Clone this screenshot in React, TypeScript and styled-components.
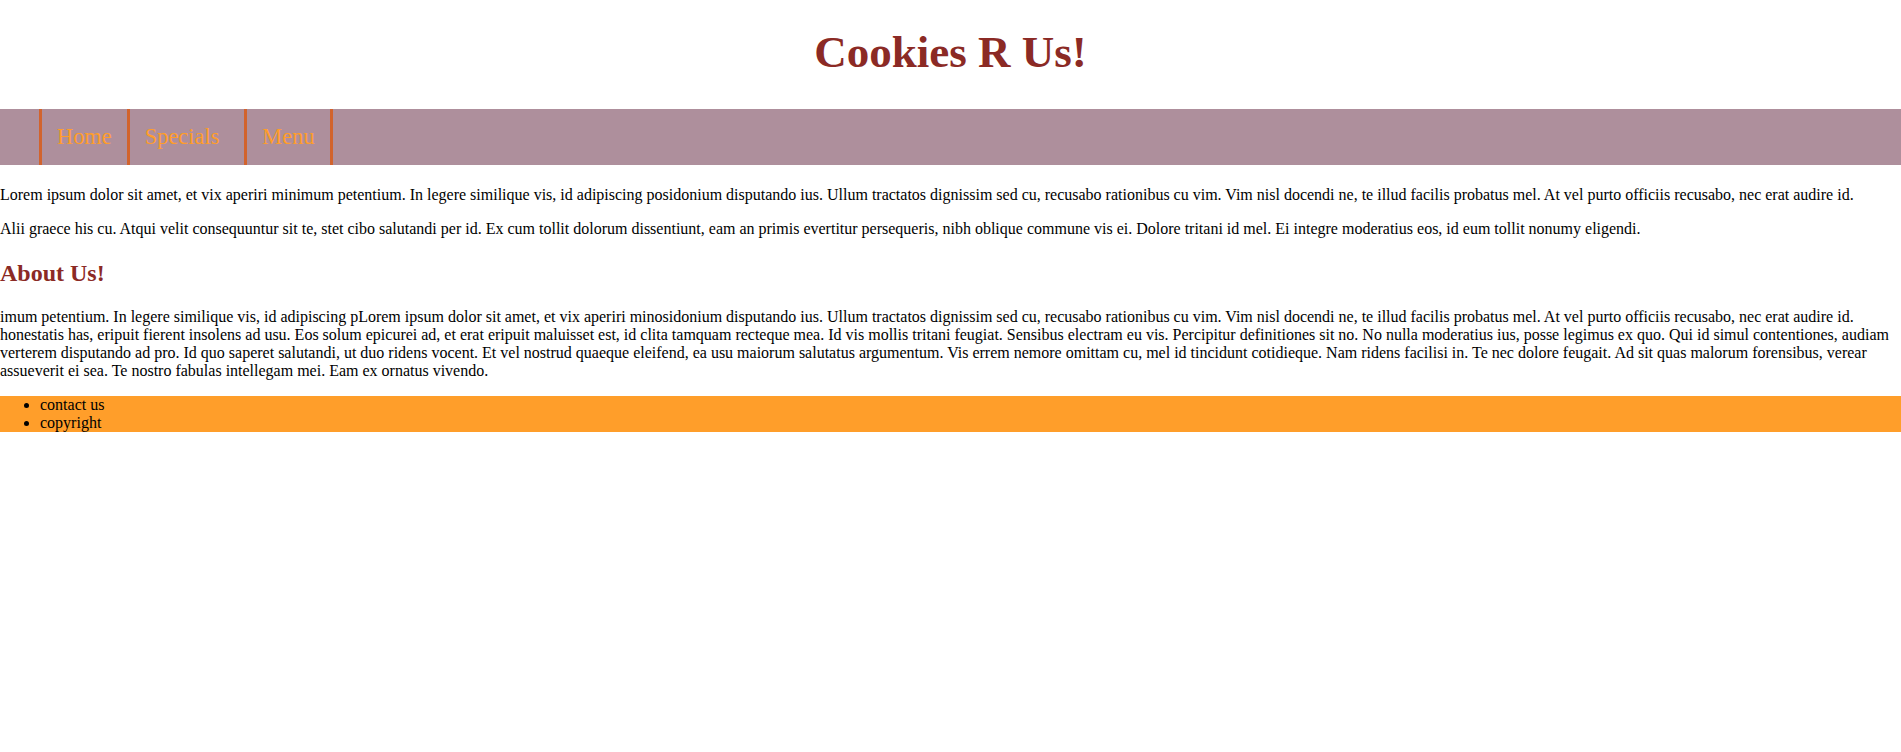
import React from "react";
import styled, { createGlobalStyle } from "styled-components";

const GlobalStyle = createGlobalStyle`
  html, body {
    margin: 0;
    padding: 0;
    background: #ffffff;
  }
  body {
    font-family: "Liberation Serif", "Times New Roman", serif;
    font-size: 16px;
    line-height: 18px;
    color: #000000;
  }
`;

const Header = styled.header`
  padding: 28px 0 33px;
  text-align: center;
`;

const Title = styled.h1`
  margin: 0;
  font-size: 45px;
  line-height: 48px;
  font-weight: bold;
  color: #8b2a25;
`;

const NavBar = styled.nav`
  height: 56px;
  background: #ae8f9c;
`;

const NavList = styled.ul`
  display: flex;
  align-items: stretch;
  height: 100%;
  margin: 0;
  padding: 0 0 0 39px;
  list-style: none;
`;

const NavItem = styled.li<{ $last?: boolean; $extra?: number }>`
  display: flex;
  align-items: center;
  padding: 0 ${(p) => 15 + (p.$extra ?? 0)}px 0 15px;
  border-left: 3px solid #d2632d;
  border-right: ${(p) => (p.$last ? "3px solid #d2632d" : "none")};
  font-size: 22.4px;
  line-height: normal;
  color: #ff9d2a;
`;

const Main = styled.main`
  padding-top: 5px;
`;

const Para = styled.p`
  margin: 16px 0;
`;

const SubHeading = styled.h2`
  margin: 22px 0 20px;
  font-size: 24px;
  line-height: 27.6px;
  font-weight: bold;
  color: #8b2a25;
`;

const Footer = styled.footer`
  background: #ff9e2a;
`;

const FooterList = styled.ul`
  margin: 0;
  padding-left: 40px;
  list-style: disc;
`;

export default function App() {
  return (
    <>
      <GlobalStyle />
      <Header>
        <Title>Cookies R Us!</Title>
      </Header>
      <NavBar>
        <NavList>
          <NavItem>Home</NavItem>
          <NavItem $extra={10}>Specials</NavItem>
          <NavItem $last>Menu</NavItem>
        </NavList>
      </NavBar>
      <Main>
        <Para>
          Lorem ipsum dolor sit amet, et vix aperiri minimum petentium. In legere similique vis, id adipiscing
          posidonium disputando ius. Ullum tractatos dignissim sed cu, recusabo rationibus cu vim. Vim nisl docendi
          ne, te illud facilis probatus mel. At vel purto officiis recusabo, nec erat audire id.
        </Para>
        <Para>
          Alii graece his cu. Atqui velit consequuntur sit te, stet cibo salutandi per id. Ex cum tollit dolorum
          dissentiunt, eam an primis evertitur persequeris, nibh oblique commune vis ei. Dolore tritani id mel. Ei
          integre moderatius eos, id eum tollit nonumy eligendi.
        </Para>
        <SubHeading>About Us!</SubHeading>
        <Para>
          imum petentium. In legere similique vis, id adipiscing pLorem ipsum dolor sit amet, et vix aperiri
          minosidonium disputando ius. Ullum tractatos dignissim sed cu, recusabo rationibus cu vim. Vim nisl docendi
          ne, te illud facilis probatus mel. At vel purto officiis recusabo, nec erat audire id. honestatis has,
          eripuit fierent insolens ad usu. Eos solum epicurei ad, et erat eripuit maluisset est, id clita tamquam
          recteque mea. Id vis mollis tritani feugiat. Sensibus electram eu vis. Percipitur definitiones sit no. No
          nulla moderatius ius, posse legimus ex quo. Qui id simul contentiones, audiam verterem disputando ad pro. Id
          quo saperet salutandi, ut duo ridens vocent. Et vel nostrud quaeque eleifend, ea usu maiorum salutatus
          argumentum. Vis errem nemore omittam cu, mel id tincidunt cotidieque. Nam ridens facilisi in. Te nec dolore
          feugait. Ad sit quas malorum forensibus, verear assueverit ei sea. Te nostro fabulas intellegam mei. Eam ex
          ornatus vivendo.
        </Para>
      </Main>
      <Footer>
        <FooterList>
          <li>contact us</li>
          <li>copyright</li>
        </FooterList>
      </Footer>
    </>
  );
}
